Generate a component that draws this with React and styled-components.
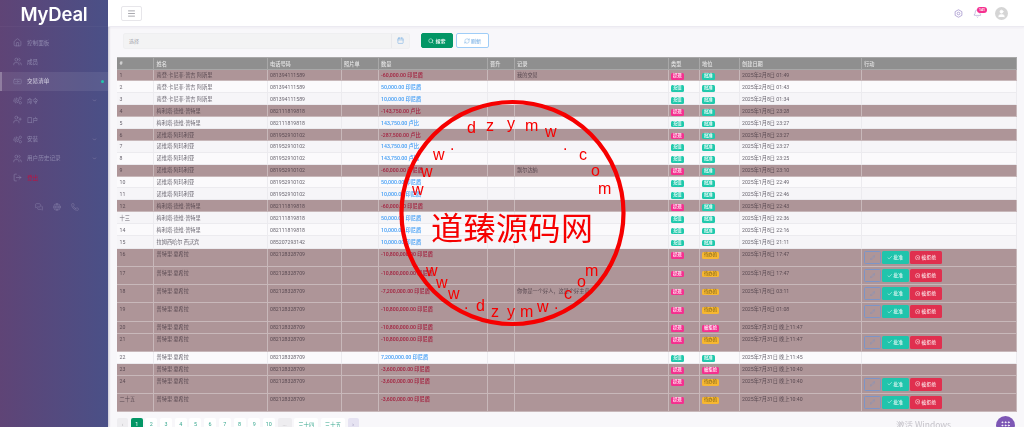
import React from 'react';
import styled, { createGlobalStyle } from 'styled-components';
import { Home, Users, Banknote, UserPlus, LogOut, MessagesSquare, Globe, Phone, ChevronDown, Menu, Bell, User, Search, RefreshCw, Calendar, Check, Pencil, CircleX, Grip } from 'lucide-react';

const Global = createGlobalStyle`
  html, body { margin: 0; padding: 0; height: 427px; overflow: hidden; background: #f8f7fa; }
  * { box-sizing: border-box; }
  body { font-family: Roboto, "Noto Sans CJK SC", sans-serif; }
`;

const Page = styled.div`
  position: relative; display: flex; width: 1024px; height: 427px; overflow: hidden;
  filter: blur(0.3px);
`;
const Sidebar = styled.aside`
  width: 108px; flex: none; display: flex; flex-direction: column;
  background: linear-gradient(90deg, #5f4476 0%, #4a5087 100%);
  color: #8d87ad; box-shadow: 1px 0 2px rgba(60,50,90,.25);
`;
const Brand = styled.div`
  height: 27px; display: flex; justify-content: center; color: #fff; padding-top: 1.5px;
  font: 600 18.5px/24px Inter, sans-serif; letter-spacing: -.2px; border-bottom: 1px solid rgba(255,255,255,.03);
`;
const Nav = styled.nav`
  display: flex; flex-direction: column; padding-top: 6px;
`;
const NavItem = styled.div`
  height: 19.3px; display: flex; align-items: center; gap: 5px; padding: 0 6px 0 13px;
  font-size: 5.6px; position: relative;
  color: ${p => p.$danger ? '#c0103f' : p.$active ? '#d8d5e5' : '#8d87ad'};
  background: ${p => p.$active ? 'rgba(255,255,255,.08)' : 'transparent'};
  border-left: ${p => p.$active ? '2px solid rgba(255,255,255,.25)' : '0'};
  ${p => p.$active ? 'padding-left: 11px;' : ''}
  & > svg:first-child { width: 9px; height: 9px; color: #8d87ad; flex: none; }
`;
const NavLabel = styled.span`flex: 1;`;
const Dot = styled.i`width: 3px; height: 3px; border-radius: 50%; background: #20c9ac; margin-right: -2px;`;
const Chev = styled(ChevronDown)`width: 5px; height: 5px; color: #7f7aa3; margin-right: 5px;`;
const SideFoot = styled.div`
  display: flex; justify-content: center; gap: 10px; padding: 16px 0 0 5px;
  color: #8d87ad; svg { width: 8px; height: 8px; }
`;

const Main = styled.main`flex: 1; min-width: 0; display: flex; flex-direction: column;`;
const Topbar = styled.header`
  height: 27px; flex: none; background: #fff; display: flex; align-items: center; padding: 0 16px 0 13px;
  border-bottom: 1px solid #eceaf1; box-shadow: 0 1px 2px rgba(70,60,110,.05);
`;
const Burger = styled.button`
  width: 21px; height: 15px; padding: 0; display: flex; align-items: center; justify-content: center;
  background: #fff; border: 1px solid #e7e6ea; border-radius: 2px; color: #8c8c94;
  svg { width: 9px; height: 9px; }
`;
const TopIcons = styled.div`
  margin-left: auto; display: flex; align-items: center; gap: 10px; color: #a99ad0;
  svg { width: 9px; height: 9px; }
`;
const BellWrap = styled.span`position: relative; display: flex;`;
const Count = styled.b`
  position: absolute; top: -2px; left: 4px; width: 10px; height: 6px; border-radius: 3px; background: #f5308f;
  color: #fff; font: 700 3.6px/6px Roboto, sans-serif; text-align: center;
`;
const Avatar = styled.span`
  width: 13px; height: 13px; margin-left: 3px; border-radius: 50%; background: #d5d5d5; display: flex; align-items: center; justify-content: center;
  svg { width: 9px; height: 9px; color: #fff; fill: #fff; }
`;

const Content = styled.div`flex: 1; min-height: 0; padding: 5.5px 8px 0 9px; display: flex; flex-direction: column;`;
const Filters = styled.div`display: flex; align-items: center; height: 16px; padding-left: 6px; gap: 11px; margin-bottom: 8.5px;`;
const DateField = styled.div`
  width: 287px; height: 16px; display: flex; align-items: center; background: #f3f3f4; border: 1px solid #efeff1; border-radius: 2px;
  color: #a5a5ac; font-size: 5px; padding-left: 5px;
`;
const FieldText = styled.span`flex: 1;`;
const CalBox = styled.span`
  width: 18px; height: 100%; display: flex; align-items: center; justify-content: center; border-left: 1px solid #e9e9ec; color: #7fb4e6;
  svg { width: 7px; height: 7px; }
`;
const Btns = styled.div`display: flex; gap: 3px;`;
const Btn = styled.button`
  height: 15.5px; width: ${p => p.$w}px; padding: 0; display: flex; align-items: center; justify-content: center; gap: 1px; border-radius: 2px;
  font: 500 5px Roboto, "Noto Sans CJK SC", sans-serif;
  background: ${p => p.$primary ? '#039665' : '#fff'};
  color: ${p => p.$primary ? '#fff' : '#7fb4e6'};
  border: 1px solid ${p => p.$primary ? '#039665' : '#9fcdf7'};
  svg { width: 6px; height: 6px; }
`;

const Table = styled.table`
  width: 899px; table-layout: fixed; border-collapse: collapse; font-size: 5.2px; color: #5f5b66; flex: none;
`;
const Th = styled.th`
  height: 11.5px; padding: 0 2.5px; background: #8f8f8f; color: #e4e4e4; font-weight: 500; text-align: left;
  border: 1px solid #a8a8a8; border-width: 1px 1px 1px 0; font-size: 5.2px;
`;
const Tr = styled.tr`
  height: ${p => p.$h}px;
  background: ${p => p.$dark ? '#ae9598' : p.$alt ? '#f6f5f8' : '#fbfafc'};
  color: ${p => p.$dark ? '#5a4a52' : '#6a6670'};
`;
const Td = styled.td`
  padding: 2.6px 2.5px 0; vertical-align: top; white-space: nowrap; overflow: hidden; line-height: 6.5px;
  border-right: 1px solid ${p => p.$dark ? '#c8b8ba' : '#ecebef'};
  border-bottom: 1px solid ${p => p.$dark ? '#c8b8ba' : '#ecebef'};
`;
const Money = styled.b`font-weight: 500; color: ${p => p.$neg ? '#a3213f' : '#3f9cf5'};`;
const Badge = styled.span`
  display: inline-block; padding: 0 1.9px; height: 6.8px; line-height: 6.8px; border-radius: 1.5px; font-size: 4.4px; font-weight: 500;
  color: ${p => p.$c === '#f7b731' ? '#8a6d1c' : '#fff'}; background: ${p => p.$c};
`;
const Actions = styled.div`display: flex; gap: 1px; margin-top: -0.5px;`;
const Act = styled.span`
  height: 13px; width: ${p => p.$w}px; display: flex; align-items: center; justify-content: center; gap: 1px; border-radius: 1.5px; font-size: 5px;
  color: ${p => p.$bg ? '#fff' : '#7c95c8'};
  background: ${p => p.$bg || 'transparent'};
  border: ${p => p.$bg ? '0' : '1px solid #7c95c8'};
  svg { width: 5.5px; height: 5.5px; }
`;

const Pager = styled.div`display: flex; gap: 2.7px; margin-top: 6.5px; font-size: 5.4px; color: #3aa890;`;
const PageBtn = styled.span`
  height: 14px; padding-top: 2.8px; text-align: center; border-radius: 2px; flex: none;
  width: ${p => p.$w || 12}px;
  background: ${p => p.$bg || '#fff'}; color: ${p => p.$c || '#3aa890'};
`;

const Activate = styled.div`position: absolute; left: 896px; top: 418.5px; font: 400 8.5px/11px "Noto Sans CJK SC", Roboto, sans-serif; color: #c4c2c9;`;
const Fab = styled.span`
  position: absolute; left: 996px; top: 415.5px; width: 19px; height: 19px; border-radius: 50%; background: #7d57b5; color: #fff;
  display: flex; align-items: center; justify-content: center; svg { width: 11px; height: 11px; }
`;
const Stamp = styled.svg`position: absolute; left: 0; top: 0; pointer-events: none;`;

const Cogs = (p) => (
  <svg viewBox="0 0 24 24" fill="none" stroke="currentColor" strokeWidth="1.4" {...p}>
    <circle cx="8.5" cy="12" r="2.6"/>
    <circle cx="8.5" cy="12" r="6.2" strokeWidth="2.6" strokeDasharray="2.4 1.9"/>
    <circle cx="19.5" cy="6" r="3.2"/>
    <circle cx="19.5" cy="18" r="3.2"/>
  </svg>
);
const HexRing = () => (
  <svg viewBox="0 0 24 24" fill="none" stroke="currentColor" strokeWidth="2.2">
    <path d="M12 2 21 7v10l-9 5-9-5V7z"/>
    <circle cx="12" cy="12" r="3.6"/>
  </svg>
);

const N1='南登·卡尼菲·普吉 阿斯里', N2='梅利塔·德维·普特里', N3='诺维塔·阿玛利亚', N4='拉姆西哈尔 西沃宾', N5='普特里·夏希拉';
const P1='081394111589', P2='082111819818', P3='081952910102', P4='085207293142', P5='082128328709';
const idr='印尼盾', rp='卢比';
const J='2025年1月8日 ', F='2025年2月8日 ', L='2025年7月31日 晚上';
const S=11.9, T=18.1;
const rows = [
 ['1',N1,P1,-1,'60,000.00',idr,'我的交易','a',F+'01:49',S],
 ['2',N1,P1,1,'50,000.00',idr,'','a',F+'01:43',S],
 ['3',N1,P1,1,'10,000.00',idr,'','a',F+'01:34',S],
 ['4',N2,P2,-1,'143,750.00',rp,'','a',J+'23:28',S],
 ['5',N2,P2,1,'143,750.00',rp,'','a',J+'23:27',S],
 ['6',N3,P3,-1,'287,500.00',rp,'','a',J+'23:27',S],
 ['7',N3,P3,1,'143,750.00',rp,'','a',J+'23:27',S],
 ['8',N3,P3,1,'143,750.00',rp,'','a',J+'23:25',S],
 ['9',N3,P3,-1,'60,000.00',idr,'飘尔达纳','a',J+'23:10',S],
 ['10',N3,P3,1,'50,000.00',idr,'','a',J+'22:49',S],
 ['11',N3,P3,1,'10,000.00',idr,'','a',J+'22:46',S],
 ['12',N2,P2,-1,'60,000.00',idr,'','a',J+'22:43',S],
 ['十三',N2,P2,1,'50,000.00',idr,'','a',J+'22:36',S],
 ['14',N2,P2,1,'10,000.00',idr,'','a',J+'22:16',S],
 ['15',N4,P4,1,'10,000.00',idr,'','a',J+'21:11',12.9],
 ['16',N5,P5,-1,'10,800,000.00',idr,'','p',J+'17:47',T],
 ['17',N5,P5,-1,'10,800,000.00',idr,'','p',J+'17:47',T],
 ['18',N5,P5,-1,'7,200,000.00',idr,'你你是一个好人，这是个好主意。','p',J+'03:11',T],
 ['19',N5,P5,-1,'10,800,000.00',idr,'','p',J+'01:08',18.6],
 ['20',N5,P5,-1,'10,800,000.00',idr,'','r',L+'11:47',S],
 ['21',N5,P5,-1,'10,800,000.00',idr,'','p',L+'11:47',T],
 ['22',N5,P5,1,'7,200,000.00',idr,'','a',L+'11:45',S],
 ['23',N5,P5,-1,'3,600,000.00',idr,'','r',L+'10:40',S],
 ['24',N5,P5,-1,'3,600,000.00',idr,'','p',L+'10:40',T],
 ['二十五',N5,P5,-1,'3,600,000.00',idr,'','p',L+'10:40',T],
];
const cols=[36.5,113.5,74,37,109,27,154,31,40,122,155];
const heads=['#','姓名','电话号码','照片单','数量','晋升','记录','类型','地位','创建日期','行动'];
const status={a:['批准','#20c9ac'],p:['待办的','#f7b731'],r:['被拒绝','#f5308f']};

const nav=[
 [Home,'控制面板'],[Users,'成员'],[Banknote,'交易清单','active'],[Cogs,'命令','chev'],[UserPlus,'口户'],[Cogs,'安装','chev'],[Users,'用户历史记录','chev'],[LogOut,'登出','danger'],
];
const stampLetters=[
 ['d',467,133],['z',486,131],['y',507,129],['m',525,131],['w',545,137],['.',450,150],['w',433,160],['w',421,177],['w',412,195],['.',563,150],['c',579,160],['o',591,176],['m',598,194],
 ['w',426,276],['w',436,288],['w',448,299],['.',464,309],['d',476,311],['z',491,317],['y',507,317],['m',520,317],['w',537,312],['.',554,309],['c',564,299],['o',577,287],['m',585,276],
];

export default function App(){
  return <><Global/><Page>
    <Sidebar>
      <Brand>MyDeal</Brand>
      <Nav>
        {nav.map(([I,t,k])=><NavItem key={t} $active={k==='active'} $danger={k==='danger'}><I strokeWidth={1.4}/><NavLabel>{t}</NavLabel>{k==='chev'&&<Chev strokeWidth={3}/>}{k==='active'&&<Dot/>}</NavItem>)}
      </Nav>
      <SideFoot><MessagesSquare strokeWidth={1.4}/><Globe strokeWidth={1.4}/><Phone strokeWidth={1.4}/></SideFoot>
    </Sidebar>
    <Main>
      <Topbar>
        <Burger><Menu/></Burger>
        <TopIcons>
          <HexRing/>
          <BellWrap><Bell strokeWidth={1.6}/><Count>141</Count></BellWrap>
          <Avatar><User/></Avatar>
        </TopIcons>
      </Topbar>
      <Content>
        <Filters>
          <DateField><FieldText>选择</FieldText><CalBox><Calendar/></CalBox></DateField>
          <Btns>
            <Btn $primary $w={32}><Search/>搜索</Btn>
            <Btn $w={33}><RefreshCw/>刷新</Btn>
          </Btns>
        </Filters>
        <Table>
          <colgroup>{cols.map((w,i)=><col key={i} width={w}/>)}</colgroup>
          <thead><tr>{heads.map(h=><Th key={h}>{h}</Th>)}</tr></thead>
          <tbody>{rows.map((r,i)=>{
            const dark=r[3]<0; const [st,sc]=status[r[7]];
            return <Tr key={r[0]} $dark={dark} $alt={i%2===0} $h={r[9]}>
              <Td $dark={dark}>{r[0]}</Td><Td $dark={dark}>{r[1]}</Td><Td $dark={dark}>{r[2]}</Td><Td $dark={dark}/>
              <Td $dark={dark}><Money $neg={dark}>{dark?'-':''}{r[4]} {r[5]}</Money></Td><Td $dark={dark}/>
              <Td $dark={dark}>{r[6]}</Td>
              <Td $dark={dark}><Badge $c={dark?'#f5308f':'#20c9ac'}>{dark?'提现':'充值'}</Badge></Td>
              <Td $dark={dark}><Badge $c={sc}>{st}</Badge></Td>
              <Td $dark={dark}>{r[8]}</Td>
              <Td $dark={dark}>{r[7]==='p'&&<Actions>
                <Act $w={16.5}><Pencil/></Act>
                <Act $w={27} $bg="#20c4ac"><Check/>批准</Act>
                <Act $w={32} $bg="#e0304f"><CircleX/>被拒绝</Act>
              </Actions>}</Td>
            </Tr>;})}</tbody>
        </Table>
        <Pager>
          <PageBtn $bg="#eeedf0" $c="#b5b5b8" $w={11}>‹</PageBtn>
          <PageBtn $bg="#039665" $c="#fff">1</PageBtn>
          {[2,3,4,5,6,7,8,9].map(n=><PageBtn key={n}>{n}</PageBtn>)}
          <PageBtn>10</PageBtn>
          <PageBtn $bg="#eeedf0" $c="#b5b5b8" $w={14}>...</PageBtn>
          <PageBtn $w={24}>三十四</PageBtn>
          <PageBtn $w={24}>三十五</PageBtn>
          <PageBtn $bg="#e6e3f2" $c="#8d87ad" $w={11}>›</PageBtn>
        </Pager>
      </Content>
    </Main>
    <Activate>激活 Windows</Activate>
    <Fab><Grip/></Fab>
    <Stamp width="1024" height="427" viewBox="0 0 1024 427">
      <circle cx="512.5" cy="213" r="111" fill="none" stroke="#f60000" strokeWidth="4.2"/>
      <text x="431" y="240" fill="#f60000" fontSize="32" fontFamily='"Noto Sans CJK SC", sans-serif' textLength="162">道臻源码网</text>
      {stampLetters.map(([c,x,y],i)=><text key={i} x={x} y={y} fill="#f60000" fontSize="16" fontFamily='"Liberation Sans", sans-serif'>{c}</text>)}
    </Stamp>
  </Page></>;
}
